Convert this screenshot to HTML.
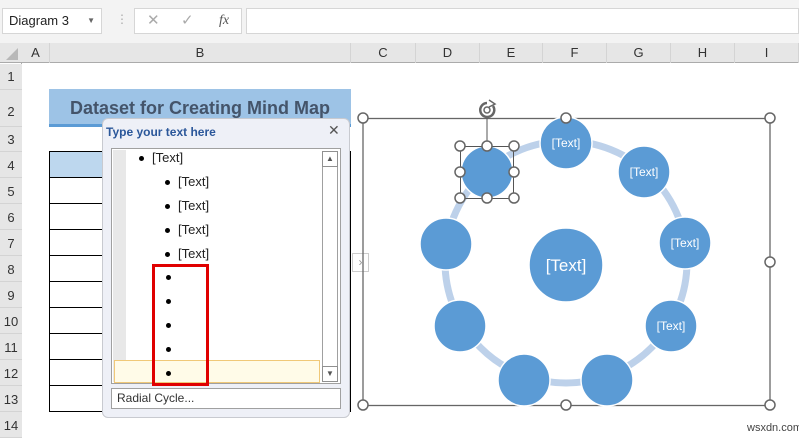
<!DOCTYPE html>
<html><head><meta charset="utf-8"><style>
*{margin:0;padding:0;box-sizing:border-box}
body{width:799px;height:438px;overflow:hidden;background:#fff;font-family:"Liberation Sans",sans-serif;position:relative}
.a{position:absolute}
.ch{position:absolute;top:43px;height:20px;font-size:13px;color:#333;text-align:center;line-height:20px;border-right:1px solid #d4d4d4}
.rh{position:absolute;left:0;width:22px;font-size:13px;color:#333;text-align:center;border-bottom:1px solid #d4d4d4;background:#e6e6e6}
.tr{position:absolute;left:49px;width:302px;border-left:1px solid #000;border-right:1px solid #000;border-bottom:1px solid #000}
.li{position:absolute;font-size:13px;color:#222}
.dot{position:absolute;width:5px;height:5px;border-radius:50%;background:#000}
</style></head><body>
<div class="a" style="left:0;top:0;width:799px;height:43px;background:#f3f3f3"></div>
<div class="a" style="left:2px;top:8px;width:100px;height:26px;background:#fff;border:1px solid #d6d6d6;font-size:13px;line-height:24px;padding-left:6px;color:#222">Diagram 3<span style="position:absolute;right:6px;top:0;font-size:8px;color:#666">▼</span></div>
<div class="a" style="left:116px;top:12px;font-size:12px;color:#aaa">⋮</div>
<div class="a" style="left:134px;top:8px;width:108px;height:26px;background:#fff;border:1px solid #d6d6d6;color:#aaa;font-size:15px;line-height:24px"><span style="position:absolute;left:12px">✕</span><span style="position:absolute;left:46px">✓</span><span style="position:absolute;left:84px;color:#555;font-style:italic;font-family:'Liberation Serif',serif;font-size:14px">fx</span></div>
<div class="a" style="left:246px;top:8px;width:553px;height:26px;background:#fff;border:1px solid #d6d6d6"></div>
<div class="a" style="left:0;top:43px;width:799px;height:20px;background:#e6e6e6;border-bottom:1px solid #ababab"></div>
<div class="a" style="left:6px;top:48px;width:0;height:0;border-left:12px solid transparent;border-bottom:12px solid #b8b8b8"></div>
<div class="ch" style="left:22px;width:28px">A</div>
<div class="ch" style="left:50px;width:301px">B</div>
<div class="ch" style="left:351px;width:65px">C</div>
<div class="ch" style="left:416px;width:64px">D</div>
<div class="ch" style="left:480px;width:63px">E</div>
<div class="ch" style="left:543px;width:64px">F</div>
<div class="ch" style="left:607px;width:64px">G</div>
<div class="ch" style="left:671px;width:64px">H</div>
<div class="ch" style="left:735px;width:64px">I</div>
<div class="a" style="left:21px;top:63px;width:1px;height:375px;background:#ababab"></div>
<div class="rh" style="top:64px;height:26px;line-height:26px">1</div>
<div class="rh" style="top:90px;height:37px;line-height:44px">2</div>
<div class="rh" style="top:127px;height:25px;line-height:25px">3</div>
<div class="rh" style="top:152px;height:26px;line-height:28px">4</div>
<div class="rh" style="top:178px;height:26px;line-height:28px">5</div>
<div class="rh" style="top:204px;height:26px;line-height:28px">6</div>
<div class="rh" style="top:230px;height:26px;line-height:28px">7</div>
<div class="rh" style="top:256px;height:26px;line-height:28px">8</div>
<div class="rh" style="top:282px;height:26px;line-height:28px">9</div>
<div class="rh" style="top:308px;height:26px;line-height:28px">10</div>
<div class="rh" style="top:334px;height:26px;line-height:28px">11</div>
<div class="rh" style="top:360px;height:26px;line-height:28px">12</div>
<div class="rh" style="top:386px;height:26px;line-height:28px">13</div>
<div class="rh" style="top:412px;height:26px;line-height:28px">14</div>
<div class="a" style="left:49px;top:89px;width:302px;height:38px;background:#9dc3e6;border-bottom:3px solid #5b9bd5;color:#44546a;font-weight:bold;font-size:18px;text-align:center;line-height:38px">Dataset for Creating Mind Map</div>
<div class="tr" style="top:151px;height:27px;background:#bdd7ee;border-top:1px solid #000"></div>
<div class="tr" style="top:178px;height:26px"></div>
<div class="tr" style="top:204px;height:26px"></div>
<div class="tr" style="top:230px;height:26px"></div>
<div class="tr" style="top:256px;height:26px"></div>
<div class="tr" style="top:282px;height:26px"></div>
<div class="tr" style="top:308px;height:26px"></div>
<div class="tr" style="top:334px;height:26px"></div>
<div class="tr" style="top:360px;height:26px"></div>
<div class="tr" style="top:386px;height:26px"></div>
<!-- pane -->
<div class="a" style="left:102px;top:118px;width:248px;height:300px;background:#eef0f7;border:1px solid #c8cad0;border-radius:6px"></div>
<div class="a" style="left:106px;top:125px;font-size:12px;font-weight:bold;color:#2b579a">Type your text here</div>
<div class="a" style="left:328px;top:122px;font-size:14px;color:#555">✕</div>
<div class="a" style="left:111px;top:148px;width:230px;height:236px;background:#fff;border:1px solid #a0a0a0"></div>
<div class="a" style="left:113px;top:150px;width:13px;height:232px;background:#e8e8e8"></div>
<div class="a" style="left:114px;top:360px;width:206px;height:23px;background:#fffbe8;border:1px solid #f0c878"></div>
<div class="a" style="left:322px;top:151px;width:16px;height:231px;border:1px solid #a0a0a0;background:#fff"></div>
<div class="a" style="left:322px;top:151px;width:16px;height:16px;border:1px solid #909090;font-size:8px;text-align:center;line-height:14px;color:#555">▲</div>
<div class="a" style="left:322px;top:366px;width:16px;height:16px;border:1px solid #909090;font-size:8px;text-align:center;line-height:14px;color:#555">▼</div>
<div class="dot" style="left:139px;top:156px"></div><div class="li" style="left:152px;top:150px">[Text]</div>
<div class="dot" style="left:165px;top:180px"></div><div class="li" style="left:178px;top:174px">[Text]</div>
<div class="dot" style="left:165px;top:204px"></div><div class="li" style="left:178px;top:198px">[Text]</div>
<div class="dot" style="left:165px;top:228px"></div><div class="li" style="left:178px;top:222px">[Text]</div>
<div class="dot" style="left:165px;top:252px"></div><div class="li" style="left:178px;top:246px">[Text]</div>
<div class="dot" style="left:166px;top:275px"></div>
<div class="dot" style="left:166px;top:299px"></div>
<div class="dot" style="left:166px;top:323px"></div>
<div class="dot" style="left:166px;top:347px"></div>
<div class="dot" style="left:166px;top:371px"></div>
<div class="a" style="left:152px;top:264px;width:57px;height:122px;border:3px solid #e00000"></div>
<div class="a" style="left:111px;top:388px;width:230px;height:21px;background:#fff;border:1px solid #a0a0a0;font-size:12px;color:#333;padding-left:5px;line-height:19px">Radial Cycle...</div>
<div class="a" style="left:352px;top:253px;width:17px;height:19px;border:1px solid #ccc;background:#fff;color:#999;font-size:12px;text-align:center;line-height:17px">›</div>
<svg class="a" style="left:0;top:0" width="799" height="438">
<rect x="363" y="118.5" width="407" height="287" fill="none" stroke="#666" stroke-width="1.3"/>
<circle cx="566" cy="262" r="121" fill="none" stroke="#bdd1ea" stroke-width="7"/>
<g fill="#5b9bd5" stroke="#fff" stroke-width="1.5">
<circle cx="566" cy="265" r="37"/>
<circle cx="566" cy="143" r="26"/>
<circle cx="644" cy="172" r="26"/>
<circle cx="685" cy="243" r="26"/>
<circle cx="671" cy="326" r="26"/>
<circle cx="607" cy="380" r="26"/>
<circle cx="524" cy="380" r="26"/>
<circle cx="460" cy="326" r="26"/>
<circle cx="446" cy="244" r="26"/>
<circle cx="487" cy="172" r="26"/>
</g>
<g fill="#fff" font-family="Liberation Sans" text-anchor="middle">
<text x="566" y="271" font-size="17">[Text]</text>
<text x="566" y="147" font-size="12">[Text]</text>
<text x="644" y="176" font-size="12">[Text]</text>
<text x="685" y="247" font-size="12">[Text]</text>
<text x="671" y="330" font-size="12">[Text]</text>
</g>
<rect x="460.5" y="146.5" width="53" height="52" fill="none" stroke="#555" stroke-width="1"/>
<line x1="487" y1="118" x2="487" y2="146" stroke="#555"/>
<g fill="#fff" stroke="#666" stroke-width="1.5">
<circle cx="363" cy="118" r="5"/><circle cx="566" cy="118" r="5"/><circle cx="770" cy="118" r="5"/>
<circle cx="770" cy="262" r="5"/><circle cx="770" cy="405" r="5"/><circle cx="566" cy="405" r="5"/><circle cx="363" cy="405" r="5"/>
<circle cx="460" cy="146" r="5"/><circle cx="487" cy="146" r="5"/><circle cx="514" cy="146" r="5"/>
<circle cx="460" cy="172" r="5"/><circle cx="514" cy="172" r="5"/>
<circle cx="460" cy="198" r="5"/><circle cx="487" cy="198" r="5"/><circle cx="514" cy="198" r="5"/>
</g>
<path d="M493 106 A7 7 0 1 1 487 103" fill="none" stroke="#666" stroke-width="2.5"/>
<circle cx="487" cy="110" r="3" fill="none" stroke="#666" stroke-width="1.5"/>
<path d="M489 100 L495 104 L489 107" fill="none" stroke="#666" stroke-width="1.5"/>
</svg>
<div class="a" style="left:747px;top:422px;font-size:11px;color:#444">wsxdn.com</div>
</body></html>
